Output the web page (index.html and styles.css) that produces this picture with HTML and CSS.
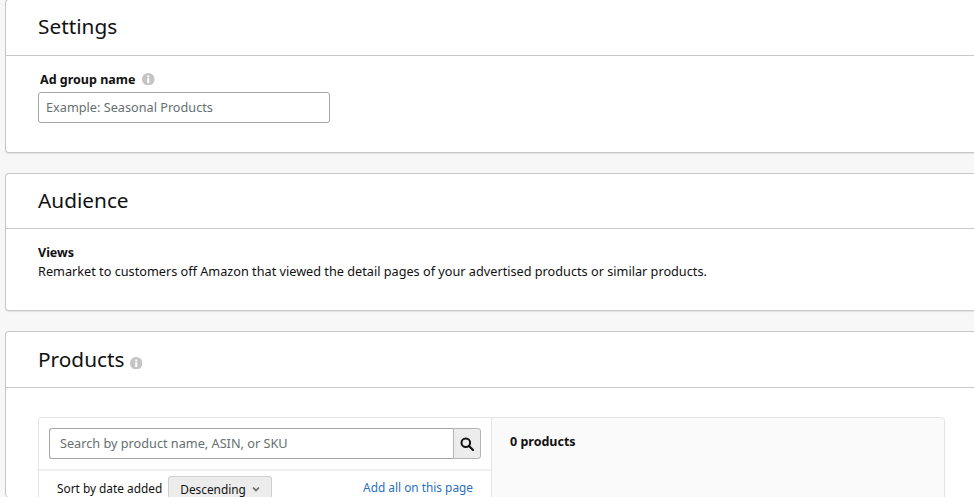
FILE: index.html
```html
<!DOCTYPE html>
<html lang="en">
<head>
    <meta charset="UTF-8">
    <title>Create ad group</title>
    <link rel="stylesheet" href="styles.css">
</head>
<body>
    <section class="card settings">
      <h2 class="card-title">Settings</h2>
      <div class="card-body">
        <div class="field-label">
          <label for="group-name">Ad group name</label>
          <svg class="info" viewBox="0 0 12 12"><circle cx="6" cy="6" r="6"/><rect x="5" y="5" width="2" height="4.6" fill="#fff"/><rect x="5" y="2.4" width="2" height="1.8" fill="#fff"/></svg>
        </div>
        <input class="text-input" id="group-name" type="text" placeholder="Example: Seasonal Products">
      </div>
    </section>

    <section class="card audience">
      <h2 class="card-title">Audience</h2>
      <div class="card-body">
        <div class="views-label">Views</div>
        <p class="views-text">Remarket to customers off Amazon that viewed the detail pages of your advertised products or similar products.</p>
      </div>
    </section>

    <section class="card products">
      <h2 class="card-title">Products <svg class="info" viewBox="0 0 12 12"><circle cx="6" cy="6" r="6"/><rect x="5" y="5" width="2" height="4.6" fill="#fff"/><rect x="5" y="2.4" width="2" height="1.8" fill="#fff"/></svg></h2>
      <div class="card-body">
        <div class="picker">
          <div class="picker-left">
            <div class="search-row">
              <div class="search">
                <input class="search-input" type="text" placeholder="Search by product name, ASIN, or SKU">
                <button class="search-btn">
                  <svg viewBox="0 0 14 14" width="14" height="14"><circle cx="5.8" cy="5.8" r="4.3" fill="none" stroke="#111" stroke-width="2"/><path d="M9 9l4 4" stroke="#111" stroke-width="2.2" stroke-linecap="round"/></svg>
                </button>
              </div>
            </div>
            <div class="sort-row">
              <span class="sort-label">Sort by date added</span>
              <button class="sort-btn">Descending
                <svg viewBox="0 0 8 6" width="8" height="6"><path d="M1 1.5l3 3 3-3" fill="none" stroke="#666" stroke-width="1.6"/></svg>
              </button>
              <a class="add-all" href="#">Add all on this page</a>
            </div>
          </div>
          <div class="picker-right">0 products</div>
        </div>
      </div>
    </section>
</body>
</html>
```

FILE: styles.css
```css
* {
    margin: 0;
    padding: 0;
    box-sizing: border-box;
}
html, body {
    height: 497px;
    overflow: hidden;
}
body {
    background: #f7f7f7;
    color: #111;
    font-family: "Noto Sans", Arial, sans-serif;
    font-size: 12.7px;
    padding-left: 5px;
    width: 974px;
}
.card {
    background: #fff;
    border: 1px solid #c8c8c8;
    border-right: none;
    border-radius: 4px 0 0 4px;
    box-shadow: 0 1px 1px rgba(0, 0, 0, 0.08);
    margin-bottom: 20px;
}
.card-title {
    font-size: 20.8px;
    font-weight: 400;
    line-height: 28px;
    padding: 12px 32px;
    border-bottom: 1px solid #c8c8c8;
    height: 55px;
}
.info {
    width: 12.5px;
    height: 12.5px;
    fill: #c4c4c4;
}
.settings {
    height: 154px;
    margin-top: -1px;
}
.settings .card-title {
    height: 56px;
}
.settings .card-body {
    padding: 14px 32px 0;
}
.field-label {
    display: flex;
    align-items: center;
    gap: 7px;
    padding-left: 2px;
    height: 18px;
    margin-bottom: 4px;
    font-size: 12.5px;
    font-weight: 700;
}
.text-input {
    display: block;
    width: 292px;
    height: 31px;
    border: 1px solid #a6a6a6;
    border-radius: 3px;
    padding: 0 7px 2px;
    font: inherit;
}
.text-input::placeholder,
.search-input::placeholder {
    color: #667071;
    opacity: 1;
}
.audience {
    height: 138px;
}
.audience .card-body {
    padding: 15px 32px 0;
}
.views-label {
    font-size: 12.5px;
    font-weight: 700;
    line-height: 18px;
}
.views-text {
    line-height: 19px;
}
.products {
    height: 166px;
    margin-bottom: 0;
    border-bottom: none;
}
.products .card-title {
    height: 56px;
    padding-top: 13px;
}
.products .card-title .info {
    vertical-align: -2px;
}
.products .card-body {
    padding: 29px 29px 0 32px;
}
.picker {
    display: flex;
    height: 80px;
    border: 1px solid #e4e4e4;
    border-bottom: none;
    border-radius: 4px 4px 0 0;
}
.picker-left {
    width: 453px;
    border-right: 1px solid #e4e4e4;
}
.picker-right {
    flex: 1;
    background: #fafafa;
    padding: 15px 18px;
    font-size: 12.5px;
    font-weight: 700;
    line-height: 18px;
    border-radius: 0 4px 0 0;
}
.search-row {
    padding: 10px 10px;
    border-bottom: 2px solid #f0f0f0;
}
.search {
    display: flex;
    height: 31px;
}
.search-input {
    flex: 1;
    min-width: 0;
    border: 1px solid #a6a6a6;
    border-right: none;
    border-radius: 3px 0 0 3px;
    padding: 0 10px 2px;
    font: inherit;
}
.search-btn {
    display: flex;
    align-items: center;
    justify-content: center;
    width: 28px;
    border: 1px solid #b4b4b4;
    border-radius: 0 3px 3px 0;
    background: #ececec;
}
.sort-row {
    display: flex;
    align-items: flex-start;
    height: 26px;
    padding: 5px 18px 0;
    font-size: 11.85px;
    line-height: 18px;
}
.sort-label {
    margin-top: 3px;
    margin-right: 6px;
}
.sort-btn {
    display: flex;
    flex-shrink: 0;
    align-items: center;
    justify-content: space-between;
    width: 104px;
    height: 21px;
    padding: 4px 11px 0;
    border: 1px solid #d0d0d0;
    border-bottom: none;
    border-radius: 3px 3px 0 0;
    background: #ececec;
    color: #111;
    font: inherit;
}
.add-all {
    margin-left: auto;
    margin-top: 2px;
    color: #2a6fc0;
    text-decoration: none;
}
```
